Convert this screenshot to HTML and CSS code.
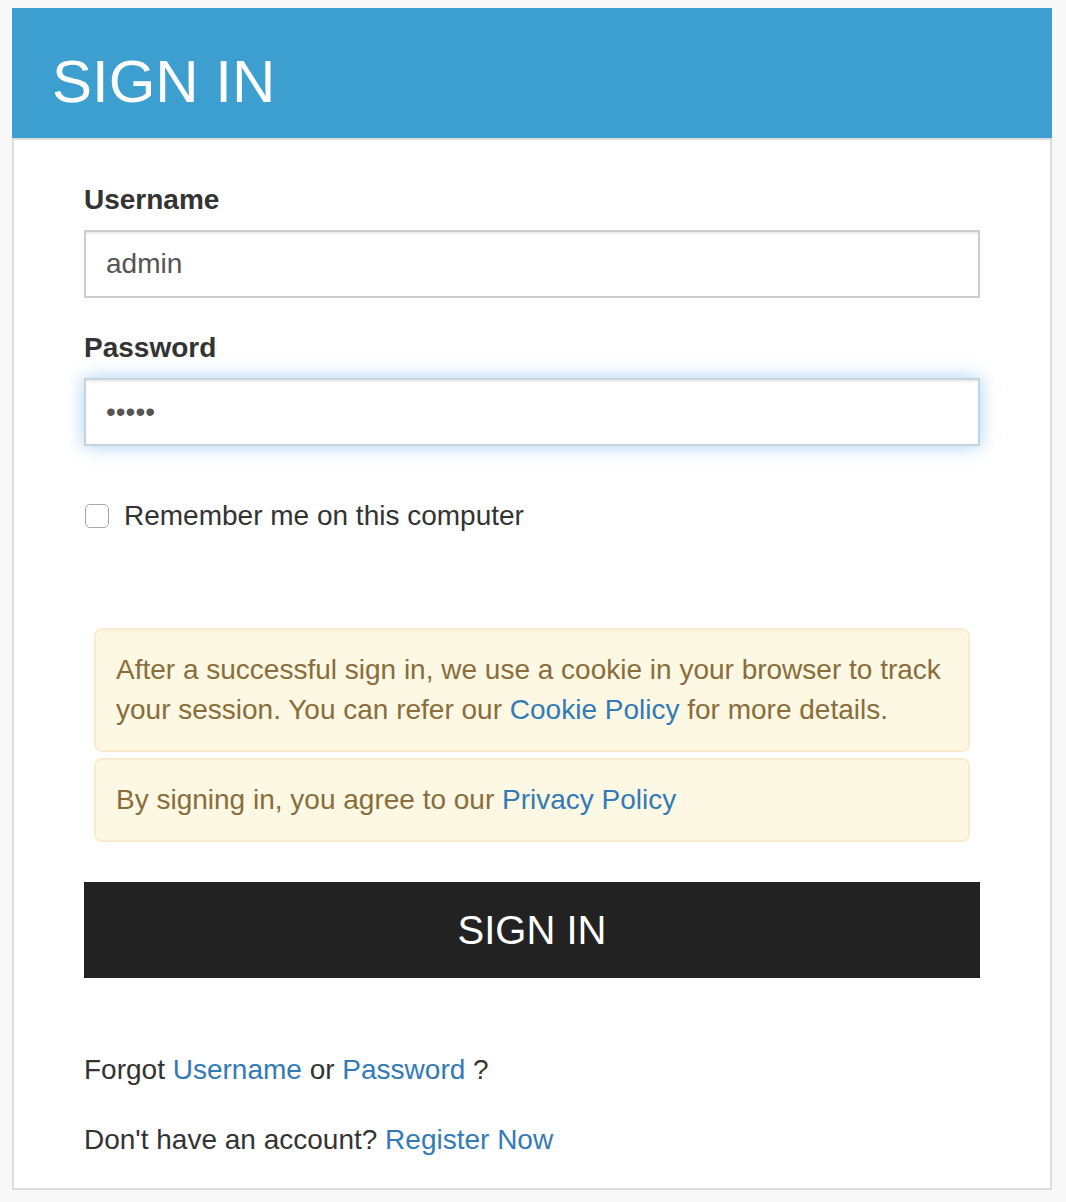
FILE: index.html
```html
<!DOCTYPE html>
<html>
<head>
<meta charset="utf-8">
<title>Sign In</title>
<link rel="stylesheet" href="styles.css">
</head>
<body>
<div class="panel">
  <div class="panel-heading">SIGN IN</div>
  <div class="panel-body">
    <div class="form-group">
      <label class="label">Username</label>
      <input class="input" type="text" value="admin">
    </div>
    <div class="form-group">
      <label class="label">Password</label>
      <input class="input focused" type="password" value="admin">
    </div>
    <div class="checkbox-row">
      <span class="checkbox"></span>
      <span>Remember me on this computer</span>
    </div>
    <div class="alerts">
      <div class="alert">After a successful sign in, we use a cookie in your browser to track your session. You can refer our <a class="link" href="#">Cookie Policy</a> for more details.</div>
      <div class="alert">By signing in, you agree to our <a class="link" href="#">Privacy Policy</a></div>
    </div>
    <button class="btn">SIGN IN</button>
    <p class="line first">Forgot <a class="link" href="#">Username</a> or <a class="link" href="#">Password</a> ?</p>
    <p class="line">Don't have an account? <a class="link" href="#">Register Now</a></p>
  </div>
</div>
</body>
</html>
```

FILE: styles.css
```css
html, body {
  margin: 0;
  background: #f8f8f8;
}
body {
  padding: 8px 14px 0 12px;
  font-family: "Liberation Sans", Arial, Helvetica, sans-serif;
  font-size: 28px;
  line-height: 40px;
  color: #333;
}
.panel {
  width: 1040px;
}
.panel-heading {
  box-sizing: border-box;
  height: 130px;
  background: #3c9fcf;
  color: #fff;
  font-size: 60px;
  line-height: 66px;
  padding: 41px 0 0 40px;
}
.panel-body {
  background: #fff;
  border: 2px solid #ddd;
  padding: 40px 70px 28px 70px;
}
.form-group {
  margin-bottom: 30px;
}
.label {
  display: block;
  font-weight: bold;
  margin-bottom: 10px;
}
.input {
  display: block;
  box-sizing: border-box;
  width: 100%;
  height: 68px;
  border: 2px solid #ccc;
  border-radius: 0;
  padding: 0 20px;
  font-family: "Liberation Sans", Arial, sans-serif;
  font-size: 28px;
  color: #555;
  background: #fff;
  outline: none;
  box-shadow: inset 0 2px 2px rgba(0,0,0,0.075);
}
.input.focused {
  border-color: #c9d3dc;
  box-shadow: inset 0 2px 2px rgba(0,0,0,0.075), 0 0 16px rgba(102,175,233,0.6);
}
.checkbox-row {
  display: flex;
  align-items: center;
  margin-top: 50px;
}
.checkbox {
  box-sizing: border-box;
  width: 24px;
  height: 24px;
  margin-left: 1px;
  margin-right: 15px;
  border: 1.5px solid #a9a9a9;
  border-radius: 5px;
  background: #fff;
}
.alerts {
  margin: 92px 10px 0 10px;
}
.alert {
  background: #fcf8e3;
  border: 2px solid #faebcc;
  border-radius: 8px;
  color: #8a6d3b;
  padding: 20px;
  margin-bottom: 6px;
}
.alert:last-child {
  margin-bottom: 0;
}
.link {
  color: #337ab7;
  text-decoration: none;
}
.btn {
  display: block;
  width: 100%;
  height: 96px;
  margin-top: 40px;
  border: none;
  background: #222;
  color: #fff;
  font-family: "Liberation Sans", Arial, sans-serif;
  font-size: 40px;
  padding: 0;
  cursor: pointer;
}
.line {
  margin: 30px 0 0 0;
}
.line.first {
  margin-top: 72px;
}
```
